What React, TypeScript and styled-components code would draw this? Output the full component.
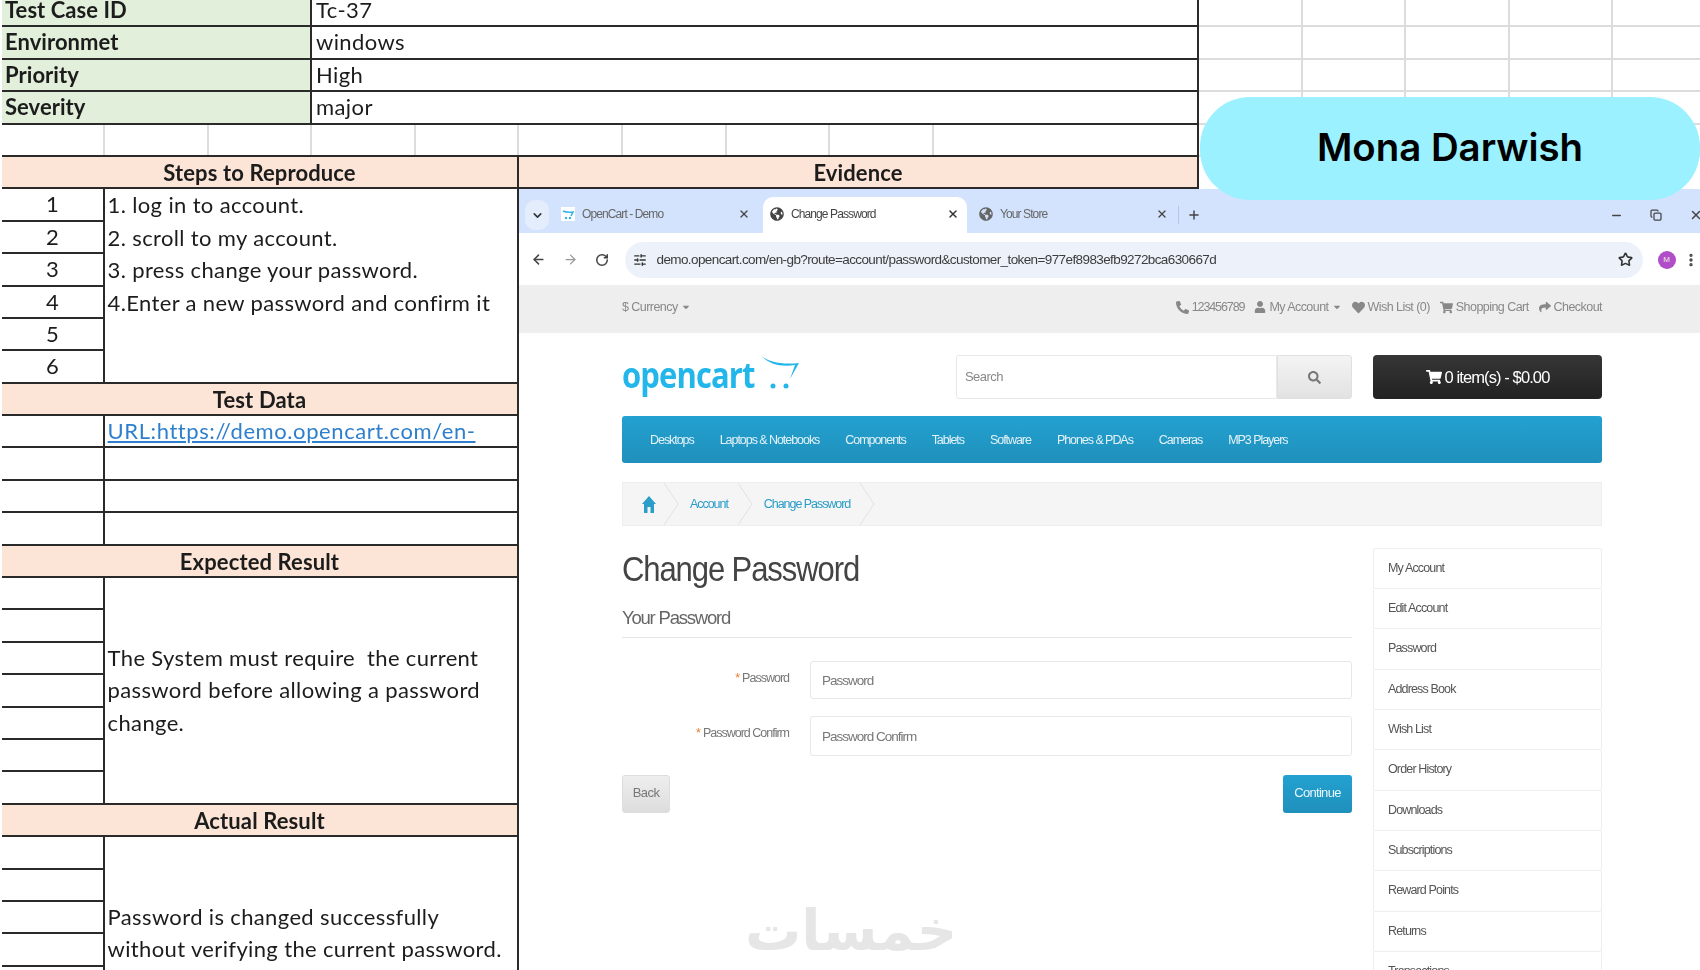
import React from 'react';
import styled, { createGlobalStyle } from 'styled-components';
import { ArrowLeft, ArrowRight, ChevronDown, Copy, EllipsisVertical, Minus, Plus, RotateCw, SlidersHorizontal, Star, X } from 'lucide-react';
import { FaCaretDown, FaGlobeAmericas, FaHeart, FaPhoneAlt, FaSearch, FaShare, FaShoppingCart, FaUser } from 'react-icons/fa';

const ROW = 32.4;
const LINE = '#2a2a2a';

const GlobalStyle = createGlobalStyle`
  html, body {
    margin: 0;
    padding: 0;
    background: #fff;
    overflow: hidden;
  }
  * {
    box-sizing: border-box;
  }
`;

const Page = styled.div`
  position: relative;
  width: 1700px;
  height: 970px;
  overflow: hidden;
  background: #fff;
  font-family: 'Liberation Sans', Arial, sans-serif;
`;

const Blurred = styled.div`
  margin-top: -5px;
  padding-left: 2px;
  filter: blur(0.45px);
`;

/* ---------- spreadsheet ---------- */

const TopBlock = styled.div`
  display: flex;
`;

const InfoTable = styled.div`
  width: 1197px;
  flex: none;
  display: grid;
  grid-template-columns: 310px 1fr;
  grid-auto-rows: ${ROW}px;
  font-family: Lato, 'Open Sans', sans-serif;
  font-size: 22px;
  color: #1c1c1c;
  border-right: 2px solid ${LINE};
`;

const InfoLabel = styled.div`
  background: #e2efda;
  font-weight: 700;
  padding-left: 3px;
  line-height: 29px;
  border-bottom: 2px solid ${LINE};
  border-right: 2px solid ${LINE};
  letter-spacing: 0.05px;
`;

const InfoValue = styled.div`
  padding-left: 4px;
  line-height: 29px;
  border-bottom: 2px solid ${LINE};
  letter-spacing: 0.4px;
`;

const BlankRow = styled.div`
  grid-column: 1 / -1;
  display: grid;
  grid-template-columns: 103px repeat(8, 103.6px) 1fr;
  border-bottom: 2px solid ${LINE};
`;

const BlankCell = styled.div`
  border-right: 2px solid #dcdcdc;
  &:last-child {
    border-right: 0;
  }
`;

const FillerGrid = styled.div`
  flex: 1;
  min-width: 0;
  display: grid;
  grid-template-columns: repeat(5, 103.6px);
  grid-auto-rows: ${ROW}px;
`;

const FillerCell = styled.div`
  border-right: 2px solid #dcdcdc;
  border-bottom: 2px solid #dcdcdc;
`;

const MainBlock = styled.div`
  display: flex;
`;

const LeftColumn = styled.div`
  width: 517px;
  flex: none;
  font-family: Lato, 'Open Sans', sans-serif;
  font-size: 22px;
  color: #1c1c1c;
  border-right: 2px solid ${LINE};
`;

const SectionHead = styled.div`
  height: ${ROW}px;
  background: #fce4d6;
  border-bottom: 2px solid ${LINE};
  font-family: Lato, 'Open Sans', sans-serif;
  font-size: 22px;
  color: #1c1c1c;
  font-weight: 700;
  text-align: center;
  line-height: 31px;
  letter-spacing: 0.12px;
`;

const SectionBody = styled.div<{ $rows: number }>`
  display: grid;
  grid-template-columns: 102.6px 1fr;
  grid-template-rows: repeat(${({ $rows }) => $rows}, ${ROW}px);
`;

const NumberCell = styled.div`
  grid-column: 1;
  border-right: 2px solid ${LINE};
  border-bottom: 2px solid ${LINE};
  text-align: center;
  line-height: 30px;
`;

const WideCell = styled.div`
  grid-column: 2;
  padding-left: 3px;
  line-height: 30px;
  border-bottom: 2px solid ${LINE};
`;

const TextCell = styled.div<{ $rows: number; $centered?: boolean }>`
  grid-column: 2;
  grid-row: 1 / span ${({ $rows }) => $rows};
  padding-left: 3px;
  line-height: ${ROW}px;
  border-bottom: 2px solid ${LINE};
  letter-spacing: 0.36px;
  display: flex;
  flex-direction: column;
  justify-content: ${({ $centered }) => ($centered ? 'center' : 'flex-start')};
`;

const SheetLink = styled.span`
  color: #2f80cc;
  text-decoration: underline;
  letter-spacing: 0.58px;
`;

const EvidenceColumn = styled.div`
  flex: 1;
  min-width: 0;
`;

const EvidenceHead = styled(SectionHead)`
  width: 680px;
  border-right: 2px solid ${LINE};
`;

/* ---------- browser chrome ---------- */

const Screenshot = styled.div`
  width: 1181px;
  height: 790px;
  overflow: hidden;
  background: #fff;
  letter-spacing: -0.55px;
`;

const TabStrip = styled.div`
  height: 44px;
  background: #d3e3fd;
  display: flex;
  align-items: flex-end;
  padding-left: 6px;
  color: #555;
`;

const TabDrop = styled.div`
  width: 24px;
  height: 30px;
  margin: 0 5px 3px 0;
  border-radius: 10px;
  background: #e4edfc;
  display: flex;
  align-items: center;
  justify-content: center;
  color: #333;
`;

const Tab = styled.div<{ $active?: boolean }>`
  width: 204px;
  height: 36px;
  margin-right: 5px;
  padding: 0 8px 3px 7px;
  border-radius: 10px 10px 0 0;
  background: ${({ $active }) => ($active ? '#fff' : 'transparent')};
  display: flex;
  align-items: center;
  gap: 7px;
  font-size: 12px;
  letter-spacing: -0.9px;
  color: ${({ $active }) => ($active ? '#444' : '#666')};
`;

const TabTitle = styled.span`
  flex: 1;
`;

const Favicon = styled.svg`
  width: 14px;
  height: 14px;
  flex: none;
`;

const TabDivider = styled.div`
  width: 1px;
  height: 18px;
  margin: 0 0 9px -3px;
  background: #b4c6e4;
`;

const NewTab = styled.div`
  width: 30px;
  height: 36px;
  display: flex;
  align-items: center;
  justify-content: center;
  color: #444;
`;

const WindowControls = styled.div`
  margin: 0 -16px 0 auto;
  display: flex;
  height: 36px;
  align-items: center;
  color: #444;
`;

const WindowButton = styled.div`
  width: 40px;
  display: flex;
  justify-content: center;
`;

const Toolbar = styled.div`
  height: 52px;
  padding: 1px 0 0 4px;
  display: flex;
  align-items: center;
  color: #444;
`;

const ToolButton = styled.div<{ $muted?: boolean }>`
  width: 31.5px;
  display: flex;
  justify-content: center;
  color: ${({ $muted }) => ($muted ? '#999' : '#444')};
`;

const Omnibox = styled.div`
  width: 1018px;
  height: 36px;
  margin-left: 7px;
  padding: 0 10px 0 8px;
  border-radius: 18px;
  background: #edf2fa;
  display: flex;
  align-items: center;
  gap: 10px;
  color: #333;
`;

const UrlText = styled.span`
  flex: 1;
  font-size: 13.5px;
  letter-spacing: -0.6px;
  color: #3c3c3c;
`;

const Avatar = styled.div`
  width: 18px;
  height: 18px;
  margin-left: 15px;
  border-radius: 50%;
  background: #b14dc8;
  color: #eed;
  font-size: 8px;
  line-height: 18px;
  text-align: center;
  letter-spacing: 0;
`;

const ToolMenu = styled.div`
  margin-left: 7px;
  color: #444;
  display: flex;
`;

/* ---------- store page ---------- */

const TopBar = styled.div`
  height: 48px;
  background: #eee;
  padding: 0 98px 4px 103px;
  display: flex;
  align-items: center;
  justify-content: space-between;
  font-size: 12.5px;
  color: #888;
`;

const TopLinks = styled.div`
  display: flex;
  gap: 10px;
`;

const TopLink = styled.span`
  display: flex;
  align-items: center;
  gap: 3px;
`;

const PhoneNumber = styled.span`
  letter-spacing: -1.1px;
`;

const Site = styled.div`
  padding: 0 98px 0 103px;
`;

const HeaderRow = styled.div`
  margin-top: 22px;
  height: 44px;
  display: flex;
`;

const LogoWrap = styled.div`
  width: 334px;
  display: flex;
  align-items: flex-start;
`;

const LogoText = styled.span`
  display: block;
  width: 135px;
  font-family: 'Open Sans', sans-serif;
  font-weight: 700;
  font-size: 36px;
  line-height: 40px;
  letter-spacing: -1px;
  color: #23b6ea;
  white-space: nowrap;
  transform: scaleX(0.86);
  transform-origin: left center;
`;

const LogoCart = styled.svg`
  width: 41px;
  height: 35px;
  margin-left: 2px;
`;

const SearchBox = styled.div`
  width: 321px;
  border: 1px solid #e8e8e8;
  border-radius: 3px 0 0 3px;
  padding-left: 8px;
  font-size: 13px;
  line-height: 42px;
  color: #888;
`;

const SearchButton = styled.div`
  width: 75px;
  background: linear-gradient(#f4f4f4, #e2e2e2);
  border: 1px solid #e0e0e0;
  border-radius: 0 3px 3px 0;
  display: flex;
  align-items: center;
  justify-content: center;
  color: #777;
`;

const CartButton = styled.div`
  width: 229px;
  margin-left: 21px;
  background: linear-gradient(#363636, #222);
  border-radius: 4px;
  display: flex;
  align-items: center;
  justify-content: center;
  gap: 3px;
  color: #fff;
  font-size: 16.5px;
  letter-spacing: -0.9px;
`;

const NavBar = styled.div`
  margin-top: 17px;
  height: 47px;
  padding-left: 28px;
  border-radius: 3px;
  background: linear-gradient(#23a1d1, #1f90bb);
  display: flex;
  align-items: center;
  gap: 26px;
  color: #e4f2f8;
  font-size: 12.5px;
  letter-spacing: -1.05px;
`;

const Breadcrumb = styled.div`
  margin-top: 19px;
  height: 44px;
  background: #f5f5f5;
  border: 1px solid #eee;
  display: flex;
  align-items: center;
  padding-left: 19px;
  color: #2a9dc9;
  font-size: 12.5px;
  letter-spacing: -1.05px;
`;

const HomeIcon = styled.svg`
  width: 14px;
  height: 17px;
  margin-right: -2px;
  fill: #2a9dc9;
`;

const CrumbSep = styled.svg`
  width: 15px;
  height: 42px;
  margin: 0 11px 0 10px;
`;

const Columns = styled.div`
  margin-top: 22px;
  display: flex;
  gap: 21px;
`;

const MainColumn = styled.div`
  width: 730px;
  flex: none;
`;

const Title = styled.h1`
  margin: 0;
  height: 43px;
  font-weight: 400;
  font-size: 35px;
  line-height: 42px;
  letter-spacing: -1.25px;
  color: #444;
  white-space: nowrap;
  transform: scaleX(0.887);
  transform-origin: left center;
`;

const Legend = styled.div`
  padding: 17px 0 9px;
  border-bottom: 1px solid #e5e5e5;
  font-size: 18.5px;
  line-height: 20px;
  letter-spacing: -1.2px;
  color: #666;
`;

const FormRow = styled.div<{ $height: number; $gap: number }>`
  height: ${({ $height }) => $height}px;
  margin-top: ${({ $gap }) => $gap}px;
  display: flex;
  gap: 21px;
`;

const FieldLabel = styled.div`
  width: 167px;
  padding-top: 10px;
  text-align: right;
  font-size: 12.5px;
  letter-spacing: -1px;
  color: #777;
`;

const Required = styled.span`
  color: #f07a2c;
  margin-right: 3px;
`;

const FieldInput = styled.div`
  flex: 1;
  border: 1px solid #e8e8e8;
  border-radius: 3px;
  padding-left: 11px;
  display: flex;
  align-items: center;
  font-size: 13.5px;
  letter-spacing: -1px;
  color: #777;
`;

const Buttons = styled.div`
  margin-top: 19px;
  display: flex;
  justify-content: space-between;
`;

const BackButton = styled.div`
  width: 48px;
  height: 38px;
  border: 1px solid #ddd;
  border-radius: 3px;
  background: linear-gradient(#eee, #ddd);
  text-align: center;
  line-height: 34px;
  font-size: 13px;
  color: #777;
`;

const ContinueButton = styled.div`
  width: 69px;
  height: 38px;
  border-radius: 3px;
  background: linear-gradient(#23a1d1, #1f90bb);
  text-align: center;
  line-height: 36px;
  font-size: 13px;
  letter-spacing: -0.7px;
  color: #e8f6fb;
`;

const Watermark = styled.div`
  margin: 88px 0 0 123px;
  width: 204px;
  text-align: center;
  font-family: 'DejaVu Sans', sans-serif;
  font-weight: 700;
  font-size: 56px;
  line-height: 60px;
  letter-spacing: 0;
  color: #e6e6e6;
`;

const SideList = styled.div`
  width: 229px;
  flex: none;
`;

const SideItem = styled.div`
  height: 40.4px;
  padding-left: 14px;
  border: 1px solid #eee;
  border-top-width: 0;
  border-radius: 2px;
  font-size: 12.5px;
  letter-spacing: -0.85px;
  line-height: 38px;
  color: #555;
  &:first-child {
    border-top-width: 1px;
  }
`;

const Pill = styled.div`
  position: absolute;
  top: 97px;
  left: 1200px;
  width: 500px;
  height: 103px;
  padding-bottom: 3px;
  border-radius: 50px;
  background: #9bf1ff;
  display: flex;
  align-items: center;
  justify-content: center;
  font-family: Inter, sans-serif;
  font-weight: 600;
  font-size: 38.4px;
  color: #000;
`;

const info = [
  ['Test Case ID', 'Tc-37'],
  ['Environmet', 'windows'],
  ['Priority', 'High'],
  ['Severity', 'major'],
];

const navItems = ['Desktops', 'Laptops & Notebooks', 'Components', 'Tablets', 'Software', 'Phones & PDAs', 'Cameras', 'MP3 Players'];

const sideItems = ['My Account', 'Edit Account', 'Password', 'Address Book', 'Wish List', 'Order History', 'Downloads', 'Subscriptions', 'Reward Points', 'Returns', 'Transactions'];

const range = (n: number) => Array.from({ length: n }, (_, i) => i);

const Chevron = () => (
  <CrumbSep viewBox="0 0 15 42" preserveAspectRatio="none">
    <polyline points="0,0 14,21 0,42" fill="none" stroke="#e2e2e2" strokeWidth="1" />
  </CrumbSep>
);

const App = () => (
  <Page>
    <GlobalStyle />
    <Blurred>
      <TopBlock>
        <InfoTable>
          {info.map(([label, value]) => (
            <React.Fragment key={label}>
              <InfoLabel>{label}</InfoLabel>
              <InfoValue>{value}</InfoValue>
            </React.Fragment>
          ))}
          <BlankRow>
            {range(10).map((i) => (
              <BlankCell key={i} />
            ))}
          </BlankRow>
        </InfoTable>
        <FillerGrid>
          {range(25).map((i) => (
            <FillerCell key={i} />
          ))}
        </FillerGrid>
      </TopBlock>
      <MainBlock>
        <LeftColumn>
          <SectionHead>Steps to Reproduce</SectionHead>
          <SectionBody $rows={6}>
            {range(6).map((i) => (
              <NumberCell key={i} style={{ gridRow: i + 1 }}>
                {i + 1}
              </NumberCell>
            ))}
            <TextCell $rows={6}>
              <div>1. log in to account.</div>
              <div>2. scroll to my account.</div>
              <div>3. press change your password.</div>
              <div>4.Enter a new password and confirm it</div>
            </TextCell>
          </SectionBody>
          <SectionHead>Test Data</SectionHead>
          <SectionBody $rows={4}>
            {range(4).map((i) => (
              <React.Fragment key={i}>
                <NumberCell />
                <WideCell>{i === 0 && <SheetLink>URL:https://demo.opencart.com/en-</SheetLink>}</WideCell>
              </React.Fragment>
            ))}
          </SectionBody>
          <SectionHead>Expected Result</SectionHead>
          <SectionBody $rows={7}>
            {range(7).map((i) => (
              <NumberCell key={i} style={{ gridRow: i + 1 }} />
            ))}
            <TextCell $rows={7} $centered>
              <div>The System must require&nbsp; the current</div>
              <div>password before allowing a password</div>
              <div>change.</div>
            </TextCell>
          </SectionBody>
          <SectionHead>Actual Result</SectionHead>
          <SectionBody $rows={6}>
            {range(6).map((i) => (
              <NumberCell key={i} style={{ gridRow: i + 1 }} />
            ))}
            <TextCell $rows={6} $centered>
              <div>Password is changed successfully</div>
              <div>without verifying the current password.</div>
            </TextCell>
          </SectionBody>
        </LeftColumn>
        <EvidenceColumn>
          <EvidenceHead>Evidence</EvidenceHead>
          <Screenshot>
            <TabStrip>
              <TabDrop>
                <ChevronDown size={13} strokeWidth={3} />
              </TabDrop>
              <Tab>
                <Favicon viewBox="0 0 14 14">
                  <rect width="14" height="14" fill="#fff" />
                  <path d="M2 4c3 1.500 6 1.500 10 1l-2 4" fill="none" stroke="#35b5e8" strokeWidth="1.600" />
                  <circle cx="5" cy="11" r="1.200" fill="#35b5e8" />
                  <circle cx="9" cy="11" r="1.200" fill="#35b5e8" />
                </Favicon>
                <TabTitle>OpenCart - Demo</TabTitle>
                <X size={12} strokeWidth={2.5} color="#444" />
              </Tab>
              <Tab $active>
                <FaGlobeAmericas size={14} />
                <TabTitle>Change Password</TabTitle>
                <X size={12} strokeWidth={3} color="#333" />
              </Tab>
              <Tab>
                <FaGlobeAmericas size={14} />
                <TabTitle>Your Store</TabTitle>
                <X size={12} strokeWidth={2.5} color="#444" />
              </Tab>
              <TabDivider />
              <NewTab>
                <Plus size={14} strokeWidth={2.5} />
              </NewTab>
              <WindowControls>
                <WindowButton>
                  <Minus size={13} strokeWidth={2.5} />
                </WindowButton>
                <WindowButton>
                  <Copy size={12} strokeWidth={2.5} />
                </WindowButton>
                <WindowButton>
                  <X size={14} strokeWidth={2.5} />
                </WindowButton>
              </WindowControls>
            </TabStrip>
            <Toolbar>
              <ToolButton>
                <ArrowLeft size={15} strokeWidth={2.4} />
              </ToolButton>
              <ToolButton $muted>
                <ArrowRight size={15} strokeWidth={2} />
              </ToolButton>
              <ToolButton>
                <RotateCw size={14} strokeWidth={2.6} />
              </ToolButton>
              <Omnibox>
                <SlidersHorizontal size={14} strokeWidth={2.4} />
                <UrlText>demo.opencart.com/en-gb?route=account/password&amp;customer_token=977ef8983efb9272bca630667d</UrlText>
                <Star size={15} strokeWidth={2.6} />
              </Omnibox>
              <Avatar>M</Avatar>
              <ToolMenu>
                <EllipsisVertical size={16} strokeWidth={3} />
              </ToolMenu>
            </Toolbar>
            <TopBar>
              <TopLink>
                $ Currency <FaCaretDown size={10} />
              </TopLink>
              <TopLinks>
                <TopLink>
                  <FaPhoneAlt size={13} /> <PhoneNumber>123456789</PhoneNumber>
                </TopLink>
                <TopLink>
                  <FaUser size={12} /> My Account <FaCaretDown size={10} />
                </TopLink>
                <TopLink>
                  <FaHeart size={13} /> Wish List (0)
                </TopLink>
                <TopLink>
                  <FaShoppingCart size={13} /> Shopping Cart
                </TopLink>
                <TopLink>
                  <FaShare size={12} /> Checkout
                </TopLink>
              </TopLinks>
            </TopBar>
            <Site>
              <HeaderRow>
                <LogoWrap>
                  <LogoText>opencart</LogoText>
                  <LogoCart viewBox="0 0 41 35">
                    <path d="M3 1C9 7 24 10 40 8L31 24L36 10C24 12 10 10 3 1Z" fill="#23b6ea" />
                    <circle cx="14" cy="31" r="2.500" fill="#23b6ea" />
                    <circle cx="27" cy="31" r="2.500" fill="#23b6ea" />
                  </LogoCart>
                </LogoWrap>
                <SearchBox>Search</SearchBox>
                <SearchButton>
                  <FaSearch size={13} />
                </SearchButton>
                <CartButton>
                  <FaShoppingCart size={16} /> 0 item(s) - $0.00
                </CartButton>
              </HeaderRow>
              <NavBar>
                {navItems.map((item) => (
                  <span key={item}>{item}</span>
                ))}
              </NavBar>
              <Breadcrumb>
                <HomeIcon viewBox="0 0 14 17">
                  <path d="M7 0L14 8H12V17H8.500V11H5.500V17H2V8H0Z" />
                </HomeIcon>
                <Chevron />
                <span>Account</span>
                <Chevron />
                <span>Change Password</span>
                <Chevron />
              </Breadcrumb>
              <Columns>
                <MainColumn>
                  <Title>Change Password</Title>
                  <Legend>Your Password</Legend>
                  <FormRow $height={38} $gap={23}>
                    <FieldLabel>
                      <Required>*</Required>Password
                    </FieldLabel>
                    <FieldInput>Password</FieldInput>
                  </FormRow>
                  <FormRow $height={40} $gap={17}>
                    <FieldLabel>
                      <Required>*</Required>Password Confirm
                    </FieldLabel>
                    <FieldInput>Password Confirm</FieldInput>
                  </FormRow>
                  <Buttons>
                    <BackButton>Back</BackButton>
                    <ContinueButton>Continue</ContinueButton>
                  </Buttons>
                  <Watermark>خمسات</Watermark>
                </MainColumn>
                <SideList>
                  {sideItems.map((item) => (
                    <SideItem key={item}>{item}</SideItem>
                  ))}
                </SideList>
              </Columns>
            </Site>
          </Screenshot>
        </EvidenceColumn>
      </MainBlock>
    </Blurred>
    <Pill>Mona Darwish</Pill>
  </Page>
);

export default App;
